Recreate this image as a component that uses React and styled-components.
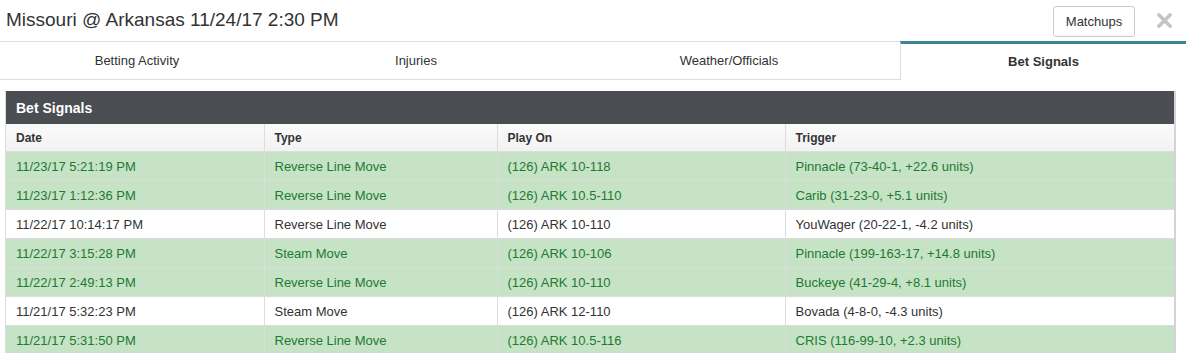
import styled, { createGlobalStyle } from 'styled-components';

const Global = createGlobalStyle`
    body {
        margin: 0;
        background: #fff;
        font-family: "Liberation Sans", Arial, sans-serif;
        color: #333;
    }
`;

const Page = styled.div`
    width: 1186px;
`;

const Header = styled.div`
    display: flex;
    align-items: center;
    height: 41px;
    padding: 0 10px 0 6px;
    box-sizing: border-box;

    h1 {
        margin: 0 0 2px 0;
        font-size: 19px;
        font-weight: normal;
        color: #333;
        flex: 1;
    }
`;

const Button = styled.button`
    height: 31px;
    width: 82px;
    margin-top: 2px;
    background: #fff;
    border: 1px solid #ccc;
    border-radius: 3px;
    font-family: inherit;
    font-size: 13px;
    color: #333;
`;

const Close = styled.span`
    display: flex;
    margin-left: 22px;
    margin-right: 4px;
`;

const Tabs = styled.div`
    display: grid;
    grid-template-columns: 274px 284px 342px 286px;
`;

const Tab = styled.div`
    height: 39px;
    display: flex;
    align-items: center;
    justify-content: center;
    font-size: 13px;
    color: #333;
    box-sizing: border-box;
    border-top: ${({ $active }) => ($active ? '3px solid #3b8597' : '1px solid #ddd')};
    border-bottom: ${({ $active }) => ($active ? 'none' : '1px solid #ddd')};
    border-left: ${({ $active }) => ($active ? '1px solid #ddd' : 'none')};
    font-weight: ${({ $active }) => ($active ? 'bold' : 'normal')};
    padding-bottom: ${({ $active }) => ($active ? '1px' : '0')};
`;

const Panel = styled.div`
    margin: 11px 10px 0 5px;
    border-right: 2px solid #d4d4d4;
    border-left: 1px solid #ddd;
`;

const PanelTitle = styled.div`
    background: #4a4d52;
    color: #fff;
    font-weight: bold;
    font-size: 14px;
    height: 33px;
    display: flex;
    align-items: center;
    padding-left: 10px;
`;

const Table = styled.table`
    width: 100%;
    border-collapse: collapse;
    table-layout: fixed;
    font-size: 13px;

    th {
        text-align: left;
        font-weight: bold;
        font-size: 12px;
        height: 27px;
        padding: 0 10px;
        background: linear-gradient(#fafafa, #f2f2f2);
        border-bottom: 1px solid #ddd;
        border-left: 1px solid #ddd;
        color: #333;
    }

    th:first-child {
        border-left: none;
    }
`;

const Cell = styled.td`
    height: 28px;
    padding: 0 10px;
    border-bottom: 1px solid #ddd;
    border-left: 1px solid #ddd;

    &:first-child {
        border-left: none;
    }
`;

const Row = styled.tr`
    background: ${({ $good }) => ($good ? '#c6e3c5' : '#fff')};
    color: ${({ $good }) => ($good ? '#1c7a33' : '#333')};
`;

const rows = [
    ['11/23/17 5:21:19 PM', 'Reverse Line Move', '(126) ARK 10-118', 'Pinnacle (73-40-1, +22.6 units)', true],
    ['11/23/17 1:12:36 PM', 'Reverse Line Move', '(126) ARK 10.5-110', 'Carib (31-23-0, +5.1 units)', true],
    ['11/22/17 10:14:17 PM', 'Reverse Line Move', '(126) ARK 10-110', 'YouWager (20-22-1, -4.2 units)', false],
    ['11/22/17 3:15:28 PM', 'Steam Move', '(126) ARK 10-106', 'Pinnacle (199-163-17, +14.8 units)', true],
    ['11/22/17 2:49:13 PM', 'Reverse Line Move', '(126) ARK 10-110', 'Buckeye (41-29-4, +8.1 units)', true],
    ['11/21/17 5:32:23 PM', 'Steam Move', '(126) ARK 12-110', 'Bovada (4-8-0, -4.3 units)', false],
    ['11/21/17 5:31:50 PM', 'Reverse Line Move', '(126) ARK 10.5-116', 'CRIS (116-99-10, +2.3 units)', true],
];

export default function App() {
    return (
        <Page>
            <Global />
            <Header>
                <h1>Missouri @ Arkansas 11/24/17 2:30 PM</h1>
                <Button>Matchups</Button>
                <Close>
                    <svg width="15" height="15" viewBox="0 0 15 15">
                        <path d="M2 2 L13 13 M13 2 L2 13" stroke="#c4c4c4" strokeWidth="3.6" strokeLinecap="square" />
                    </svg>
                </Close>
            </Header>
            <Tabs>
                <Tab>Betting Activity</Tab>
                <Tab>Injuries</Tab>
                <Tab>Weather/Officials</Tab>
                <Tab $active>Bet Signals</Tab>
            </Tabs>
            <Panel>
                <PanelTitle>Bet Signals</PanelTitle>
                <Table>
                    <colgroup>
                        <col style={{ width: 258 }} />
                        <col style={{ width: 233 }} />
                        <col style={{ width: 288 }} />
                        <col />
                    </colgroup>
                    <thead>
                        <tr>
                            <th>Date</th>
                            <th>Type</th>
                            <th>Play On</th>
                            <th>Trigger</th>
                        </tr>
                    </thead>
                    <tbody>
                        {rows.map((r, i) => (
                            <Row key={i} $good={r[4]}>
                                <Cell>{r[0]}</Cell>
                                <Cell>{r[1]}</Cell>
                                <Cell>{r[2]}</Cell>
                                <Cell>{r[3]}</Cell>
                            </Row>
                        ))}
                    </tbody>
                </Table>
            </Panel>
        </Page>
    )
}
